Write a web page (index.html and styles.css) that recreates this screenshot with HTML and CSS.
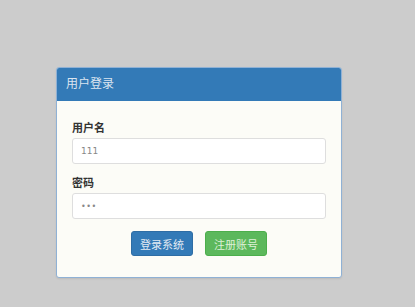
FILE: index.html
```html
<!DOCTYPE html>
<html lang="zh-CN">
<head>
    <meta charset="UTF-8">
    <meta name="viewport" content="width=device-width, initial-scale=1.0">
    <title>用户登录</title>
    <link rel="stylesheet" href="styles.css">
</head>
<body>
    <div class="page">
        <div class="login-panel">
            <div class="panel-heading">用户登录</div>
            <form class="panel-body" id="loginForm">
                <div class="form-group">
                    <label for="username">用户名</label>
                    <input type="text" id="username" name="username" value="111">
                </div>
                <div class="form-group">
                    <label for="password">密码</label>
                    <input type="password" id="password" name="password" value="111">
                </div>
                <div class="btn-row">
                    <button type="submit" class="btn btn-primary">登录系统</button>
                    <button type="button" class="btn btn-success">注册账号</button>
                </div>
            </form>
        </div>
    </div>
</body>
</html>
```

FILE: styles.css
```css
* {
    margin: 0;
    padding: 0;
    box-sizing: border-box;
}

body {
    font-family: "Liberation Sans", "Noto Sans CJK SC", sans-serif;
    background-color: #cccccc;
    min-height: 100vh;
}

.page {
    padding: 67px 0 0 56px;
}

.login-panel {
    width: 286px;
    background: #fcfcf7;
    border: 1px solid #8fb1d5;
    border-radius: 3px;
    box-shadow: 0 1px 2px rgba(0, 0, 0, 0.08);
}

.panel-heading {
    height: 33px;
    line-height: 33px;
    padding-left: 9px;
    background: #337ab7;
    color: #dbe5f0;
    font-size: 12px;
    border-radius: 2px 2px 0 0;
}

.panel-body {
    padding: 20px 15px 21px;
}

.form-group {
    margin-bottom: 12px;
}

.form-group label {
    display: block;
    line-height: 14px;
    margin-bottom: 3px;
    font-size: 11px;
    font-weight: bold;
    color: #333;
}

.form-group input {
    display: block;
    width: 100%;
    height: 26px;
    padding: 0 8px;
    font-family: "DejaVu Sans", sans-serif;
    font-size: 9px;
    color: #888;
    background: #fff;
    border: 1px solid #dedede;
    border-radius: 3px;
}

.form-group input[type="password"] {
    font-size: 8px;
    letter-spacing: 0.5px;
}

.btn-row {
    display: flex;
    justify-content: center;
    gap: 12px;
}

.btn {
    width: 62px;
    height: 25px;
    font-family: inherit;
    font-size: 11px;
    color: #e1eaf3;
    border: 1px solid transparent;
    border-radius: 3px;
    cursor: pointer;
}

.btn-primary {
    background: #337ab7;
    border-color: #2e6da4;
}

.btn-success {
    background: #5cb85c;
    border-color: #4cae4c;
    color: #dff0d8;
}
```
